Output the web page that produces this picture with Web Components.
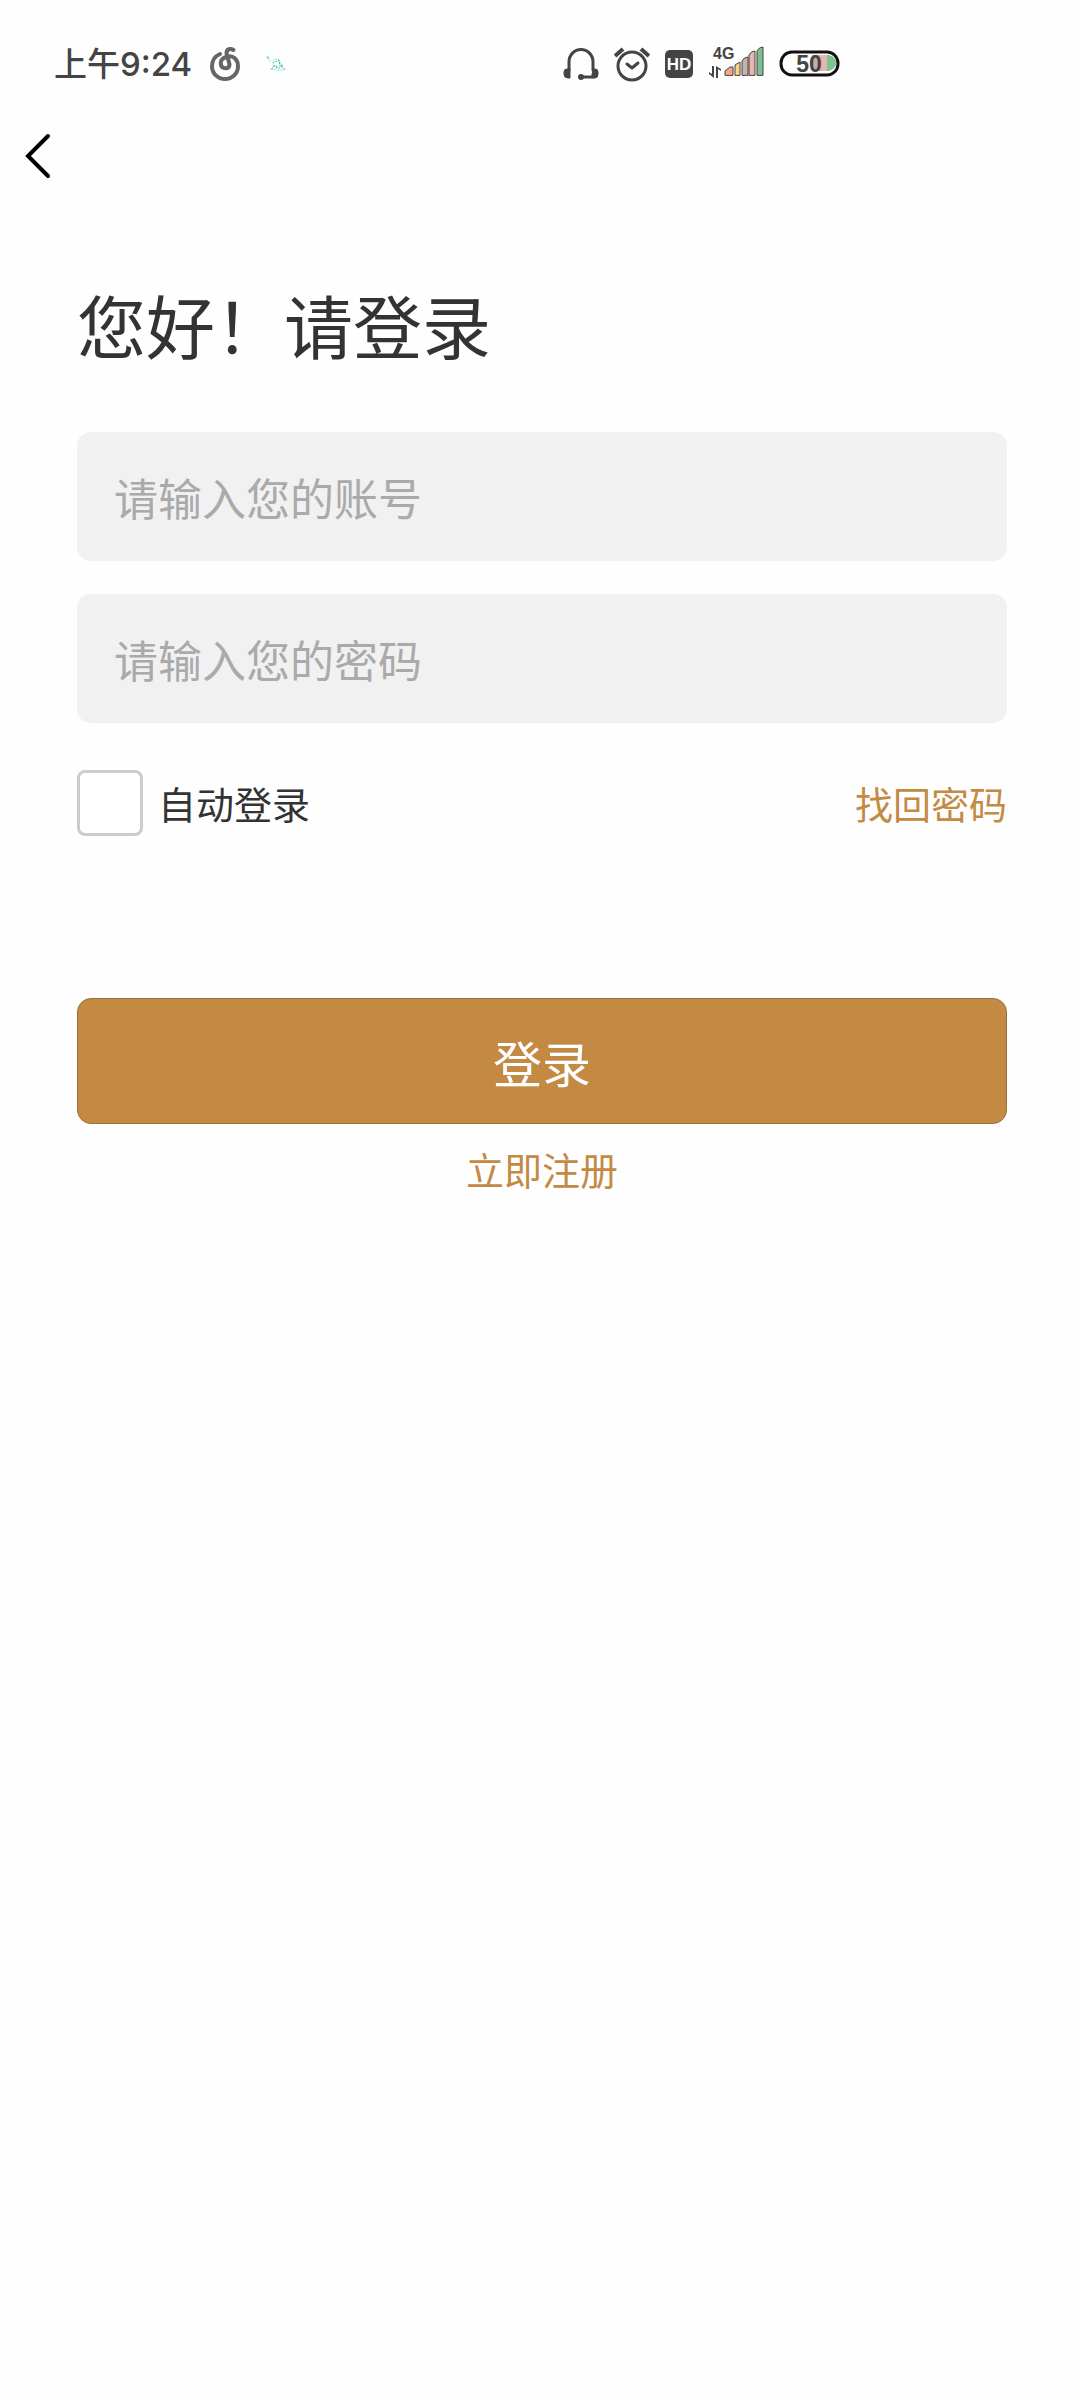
<!DOCTYPE html>
<html lang="zh-CN">
<head>
<meta charset="utf-8">
<meta name="viewport" content="width=device-width, initial-scale=1">
<title>登录</title>
<style>
    body {
        margin: 0;
        background: #fefefe;
        color: #333;
        font-family: "Noto Sans CJK SC", sans-serif;
    }
</style>
</head>
<body>
<login-page>
    <status-bar slot="status" time="上午9:24"></status-bar>
    <nav-bar slot="nav"></nav-bar>
    <span slot="title">您好！请登录</span>
    <text-field type="text" name="account" placeholder="请输入您的账号"></text-field>
    <text-field type="password" name="password" placeholder="请输入您的密码"></text-field>
    <check-field slot="options" name="auto">自动登录</check-field>
    <text-link slot="options" href="#forgot">找回密码</text-link>
    <submit-button slot="actions">登录</submit-button>
    <text-link slot="actions" href="#register">立即注册</text-link>
</login-page>

<script>
class BaseElement extends HTMLElement {
    constructor() {
        super()
        this.attachShadow({mode: 'open'})
        this.shadowRoot.appendChild(this.getTemplate().content.cloneNode(true))
    }

    getTemplate() {
        const template = document.createElement('template')
        template.innerHTML = `<style>${this.css}</style>${this.html}`
        return template
    }
}

class StatusBar extends BaseElement {
    get css() {
        return `
            :host {
                display: flex;
                align-items: center;
                height: 40px;
                padding: 44px 240px 0 54px;
                color: #444;
            }
            .time {
                font-family: Inter, "Noto Sans CJK SC", sans-serif;
                font-size: 33px;
                line-height: 40px;
                font-weight: 500;
            }
            .apps, .system {
                display: flex;
                align-items: center;
            }
            .apps {
                gap: 26px;
                margin-left: 18px;
            }
            .system {
                gap: 15px;
                margin-left: auto;
            }
            svg {
                display: block;
                fill: none;
                stroke-linecap: round;
                stroke-linejoin: round;
            }
            text {
                font-family: "Liberation Sans", sans-serif;
                font-weight: bold;
            }
        `
    }

    get html() {
        return `
            <span class="time"></span>
            <div class="apps">
                <svg width="30" height="36" viewBox="0 0 30 36" stroke="#666" stroke-width="4">
                    <path d="M10 8C5 10 2 15 2 20.500a13 12.500 0 0 0 26 0C28 13 23 9.500 18 10.500 12 11.500 10 15 11 19c1 4 8 4.500 8.500 0C19.500 16 16.500 10 16.500 7c0-4 4-5 7-3"/>
                </svg>
                <svg width="20" height="36" viewBox="0 0 20 36" stroke-width="1">
                    <path stroke="#c8f5ee" stroke-width="2" d="M1 11l3 4M5 23l12 1M8 14l4-1 4 7"/>
                    <path stroke="#3fa998" stroke-dasharray="1 2" d="M2 11v2M6 23c1-4 5-4 6-1M7 17l6-3 1 6M13 22c3-3 5 0 6 2M8 19l4 4M16 19v3"/>
                </svg>
            </div>
            <div class="system">
                <svg width="36" height="36" viewBox="0 0 36 36" stroke="#444" stroke-width="3">
                    <path d="M6 24V16a12 12.500 0 0 1 24 0v8M18 31h12v-3"/>
                    <path fill="#444" stroke-width="1" d="M6 23H4Q1 23 1 26v2q0 4 4 4h2v-9zM30 23h2q3 0 3 3v2q0 4-3 4h-2z"/>
                    <circle cx="18" cy="31" r="3" fill="#444" stroke="none"/>
                </svg>
                <svg width="36" height="36" viewBox="0 0 36 36" stroke="#444" stroke-width="3">
                    <circle cx="18" cy="20" r="14"/>
                    <path d="M13 18l5 4 6-5"/>
                    <path stroke-width="4" stroke-linecap="butt" d="M1 10l8-7M27 3l8 7"/>
                </svg>
                <svg width="28" height="36" viewBox="0 0 28 36">
                    <rect y="4" width="28" height="28" rx="5" fill="#444"/>
                    <text x="14" y="24" font-size="17" text-anchor="middle" fill="#fff">HD</text>
                </svg>
                <svg width="56" height="36" viewBox="0 0 56 36" stroke="#444" stroke-width="1">
                    <text x="5" y="13" font-size="16" fill="#444" stroke="none">4G</text>
                    <path fill="#444" stroke="none" d="M4 20h2v12L1 28v-2l3 2zM8 32h2V23l3 2v-2L8 20z"/>
                    <path fill="#f4a78c" d="M17 29v-4l5-4h3v8z"/>
                    <path fill="#fbd486" d="M27 29V19l5-3v13z"/>
                    <path fill="#c6b1ac" d="M34 29V15q2-4 6-4v18z"/>
                    <path fill="#e9b5aa" d="M41 29V9q2-4 6-4v24z"/>
                    <path fill="#7fbd92" d="M49 29V5q2-4 6-4v28z"/>
                </svg>
                <svg width="61" height="36" viewBox="0 0 61 36">
                    <path fill="#c6aca6" d="M33 9h8v16h-8z"/>
                    <path fill="#e9b5a6" d="M40 9h8v16h-8z"/>
                    <path fill="#7fc294" d="M48 9h2q7 2 7 8t-7 8h-2z"/>
                    <rect x="2" y="6" width="57" height="23" rx="11" stroke="#111" stroke-width="3"/>
                    <text x="30" y="26" font-size="23" text-anchor="middle" fill="#444">50</text>
                </svg>
            </div>
        `
    }

    connectedCallback() {
        this.shadowRoot.querySelector('.time').textContent = this.getAttribute('time')
    }
}

class NavBar extends BaseElement {
    get css() {
        return `
            :host {
                display: flex;
                align-items: center;
                height: 144px;
                padding: 0 24px;
            }
            button {
                padding: 0;
                border: 0;
                background: none;
                cursor: pointer;
            }
            svg {
                display: block;
            }
        `
    }

    get html() {
        return `
            <button type="button" aria-label="返回">
                <svg width="28" height="46" viewBox="0 0 28 46" fill="none" stroke="#000" stroke-width="4" stroke-linecap="round">
                    <path d="M24 3L4 23l20 20"/>
                </svg>
            </button>
        `
    }
}

class TextField extends BaseElement {
    get css() {
        return `
            :host {
                display: block;
            }
            input {
                display: block;
                box-sizing: border-box;
                width: 100%;
                height: 129px;
                padding: 0 37px;
                border: 0;
                border-radius: 14px;
                background: #f1f1f1;
                color: #333;
                font: inherit;
                font-size: 44px;
            }
            input::placeholder {
                color: #aaa;
                opacity: 1;
            }
        `
    }

    get html() {
        return `<input>`
    }

    connectedCallback() {
        const input = this.shadowRoot.querySelector('input')
        input.type = this.getAttribute('type')
        input.name = this.getAttribute('name')
        input.placeholder = this.getAttribute('placeholder')
        input.setAttribute('aria-label', input.placeholder)
    }
}

class CheckField extends BaseElement {
    get css() {
        return `
            :host {
                display: block;
            }
            label {
                display: flex;
                align-items: center;
                gap: 15px;
                font-size: 38px;
                line-height: 66px;
            }
            input {
                appearance: none;
                box-sizing: border-box;
                width: 66px;
                height: 66px;
                margin: 0;
                border: 3px solid #ccc;
                border-radius: 8px;
                background: #fff;
            }
            input:checked {
                background: #c48a44;
            }
        `
    }

    get html() {
        return `<label><input type="checkbox"><span><slot></slot></span></label>`
    }

    connectedCallback() {
        this.shadowRoot.querySelector('input').name = this.getAttribute('name')
    }
}

class TextLink extends BaseElement {
    get css() {
        return `
            :host {
                display: block;
                font-size: 38px;
                line-height: 66px;
            }
            a {
                color: #c48a44;
                text-decoration: none;
            }
        `
    }

    get html() {
        return `<a><slot></slot></a>`
    }

    connectedCallback() {
        this.shadowRoot.querySelector('a').href = this.getAttribute('href')
    }
}

class SubmitButton extends BaseElement {
    get css() {
        return `
            :host {
                display: block;
                align-self: stretch;
            }
            button {
                display: block;
                width: 100%;
                height: 126px;
                padding: 0;
                border: 1px solid #94713d;
                border-radius: 14px;
                background: #c48a44;
                color: #fff;
                font: inherit;
                font-size: 49px;
                cursor: pointer;
            }
        `
    }

    get html() {
        return `<button type="button"><slot></slot></button>`
    }
}

class LoginPage extends BaseElement {
    get css() {
        return `
            :host {
                display: block;
                min-height: 100vh;
            }
            main {
                padding: 46px 73px 0 77px;
            }
            h1 {
                margin: 0;
                font-size: 69px;
                line-height: 100px;
                font-weight: 400;
            }
            .fields {
                display: grid;
                gap: 33px;
                margin-top: 58px;
            }
            .options {
                display: flex;
                justify-content: space-between;
                align-items: center;
                margin-top: 47px;
            }
            .actions {
                display: flex;
                flex-direction: column;
                align-items: center;
                gap: 12px;
                margin-top: 162px;
            }
        `
    }

    get html() {
        return `
            <slot name="status"></slot>
            <slot name="nav"></slot>
            <main>
                <h1><slot name="title"></slot></h1>
                <div class="fields"><slot></slot></div>
                <div class="options"><slot name="options"></slot></div>
                <div class="actions"><slot name="actions"></slot></div>
            </main>
        `
    }
}

window.customElements.define('status-bar', StatusBar)
window.customElements.define('nav-bar', NavBar)
window.customElements.define('text-field', TextField)
window.customElements.define('check-field', CheckField)
window.customElements.define('text-link', TextLink)
window.customElements.define('submit-button', SubmitButton)
window.customElements.define('login-page', LoginPage)
</script>
</body>
</html>
